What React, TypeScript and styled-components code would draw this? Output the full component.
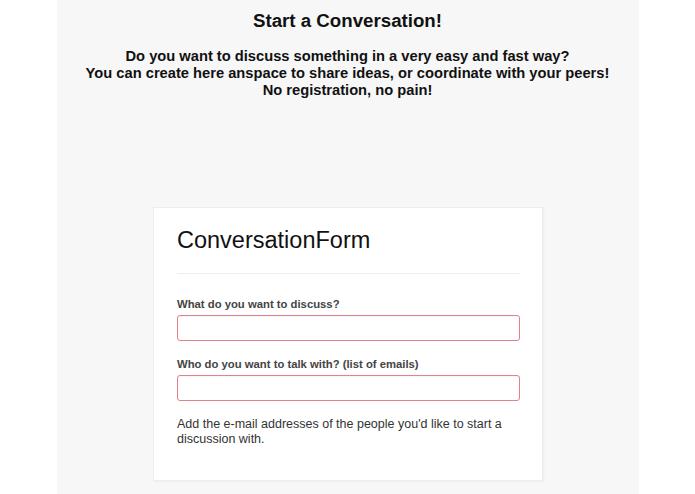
import React from "react";
import styled, { createGlobalStyle } from "styled-components";

const GlobalStyle = createGlobalStyle`
  html, body {
    margin: 0;
    padding: 0;
    background: #ffffff;
    font-family: "Liberation Sans", Arial, sans-serif;
  }
`;

const Page = styled.div`
  width: 582px;
  min-height: 100vh;
  margin: 0 auto;
  background: #f7f7f7;
  display: flex;
  flex-direction: column;
  align-items: center;
  padding-top: 10px;
  box-sizing: border-box;
`;

const Title = styled.h1`
  margin: 0;
  font-size: 18.7px;
  line-height: 22px;
  font-weight: bold;
  color: #111;
  text-align: center;
`;

const Intro = styled.p`
  margin: 16px 0 0;
  font-size: 14.7px;
  line-height: 17px;
  font-weight: bold;
  color: #111;
  text-align: center;
`;

const Card = styled.div`
  width: 390px;
  box-sizing: border-box;
  margin-top: 108px;
  margin-left: 1px;
  padding: 19px 22px 34px 23px;
  background: #ffffff;
  border: 1px solid #ededed;
  box-shadow: 1px 1px 2px rgba(0, 0, 0, 0.04);
`;

const FormTitle = styled.h2`
  margin: 0;
  font-size: 23.5px;
  line-height: 27px;
  font-weight: normal;
  color: #111;
`;

const Divider = styled.hr`
  margin: 19px 0 0;
  border: 0;
  border-top: 1px solid #eeeeee;
`;

const Field = styled.div<{ $first?: boolean }>`
  display: flex;
  flex-direction: column;
  margin-top: ${(p) => (p.$first ? "23px" : "16px")};
`;

const Label = styled.label`
  font-size: 11.3px;
  line-height: 14px;
  font-weight: bold;
  color: #444;
  margin-bottom: 4px;
`;

const Input = styled.input`
  height: 26px;
  box-sizing: border-box;
  border: 1px solid #e2808c;
  border-radius: 3px;
  padding: 0 6px;
  font-family: inherit;
  font-size: 13px;
  color: #333;
  background: #fff;
  box-shadow: inset 0 1px 1px rgba(0, 0, 0, 0.04);
  &:focus {
    outline: none;
  }
`;

const Help = styled.p`
  margin: 16px 0 0;
  font-size: 12.5px;
  line-height: 14.5px;
  color: #333;
`;

export default function App() {
  return (
    <>
      <GlobalStyle />
      <Page>
        <Title>Start a Conversation!</Title>
        <Intro>
          Do you want to discuss something in a very easy and fast way?
          <br />
          You can create here anspace to share ideas, or coordinate with your peers!
          <br />
          No registration, no pain!
        </Intro>
        <Card>
          <FormTitle>ConversationForm</FormTitle>
          <Divider />
          <Field $first>
            <Label htmlFor="topic">What do you want to discuss?</Label>
            <Input id="topic" type="text" autoFocus />
          </Field>
          <Field>
            <Label htmlFor="emails">Who do you want to talk with? (list of emails)</Label>
            <Input id="emails" type="text" />
          </Field>
          <Help>
            Add the e-mail addresses of the people you'd like to start a discussion with.
          </Help>
        </Card>
      </Page>
    </>
  );
}
